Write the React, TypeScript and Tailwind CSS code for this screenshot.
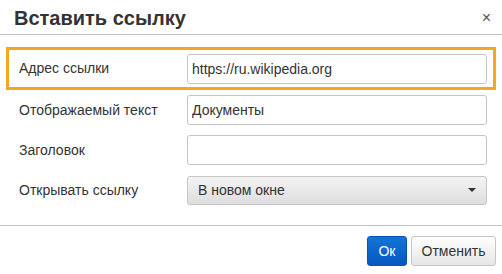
export default function App() {
  const font = { fontFamily: '"Liberation Sans", Arial, sans-serif' };
  return (
    <div className="w-[502px] h-[274px] bg-white text-[#333] overflow-hidden" style={font}>
      <div className="h-[35px] border-b border-[#c5c5c5] flex items-center justify-between pl-[14px] pr-[11px]">
        <h1 className="text-[20px] font-bold leading-none mt-[1px]">Вставить ссылку</h1>
        <span className="text-[16px] text-[#555] leading-none mt-[2px]">×</span>
      </div>

      <div className="h-[190px] flex flex-col pt-[12px] px-[6px]">
        <div className="h-[43px] border-[3px] border-[#f5a623] flex items-center pl-[10px] pr-[4px]">
          <label className="w-[168px] text-[14px]">Адрес ссылки</label>
          <input
            readOnly
            value="https://ru.wikipedia.org"
            className="w-[300px] h-[30px] border border-[#c5c5c5] rounded-[3px] px-[4px] text-[14px] text-[#333] outline-none"
            style={font}
          />
        </div>

        <div className="flex flex-col gap-[10px] mt-[5px] pl-[13px]">
          <div className="flex items-center h-[30px]">
            <label className="w-[168px] text-[14px]">Отображаемый текст</label>
            <input
              readOnly
              value="Документы"
              className="w-[300px] h-[30px] border border-[#c5c5c5] rounded-[3px] px-[4px] text-[14px] text-[#333] outline-none"
              style={font}
            />
          </div>
          <div className="flex items-center h-[30px]">
            <label className="w-[168px] text-[14px]">Заголовок</label>
            <input
              readOnly
              value=""
              className="w-[300px] h-[30px] border border-[#c5c5c5] rounded-[3px] px-[4px] text-[14px] outline-none"
            />
          </div>
          <div className="flex items-center h-[30px]">
            <label className="w-[168px] text-[14px]">Открывать ссылку</label>
            <div className="w-[300px] h-[29px] border border-[#c5c5c5] rounded-[3px] bg-gradient-to-b from-[#f4f4f4] to-[#dedede] flex items-center justify-between pl-[10px] pr-[10px] text-[14px]">
              <span>В новом окне</span>
              <span className="w-0 h-0 border-l-[4px] border-r-[4px] border-t-[4px] border-l-transparent border-r-transparent border-t-[#333]" />
            </div>
          </div>
        </div>
      </div>

      <div className="h-[49px] border-t border-[#c5c5c5] flex items-center justify-end gap-[4px] pr-[6px] pt-[2px]">
        <button className="w-[40px] h-[30px] rounded-[3px] border border-[#0a53b0] bg-gradient-to-b from-[#1474d8] to-[#0558c0] text-white text-[14px]" style={font}>
          Ок
        </button>
        <button className="w-[85px] h-[30px] rounded-[3px] border border-[#c5c5c5] bg-gradient-to-b from-[#ffffff] to-[#e6e6e6] text-[#333] text-[14px]" style={font}>
          Отменить
        </button>
      </div>
    </div>
  );
}
